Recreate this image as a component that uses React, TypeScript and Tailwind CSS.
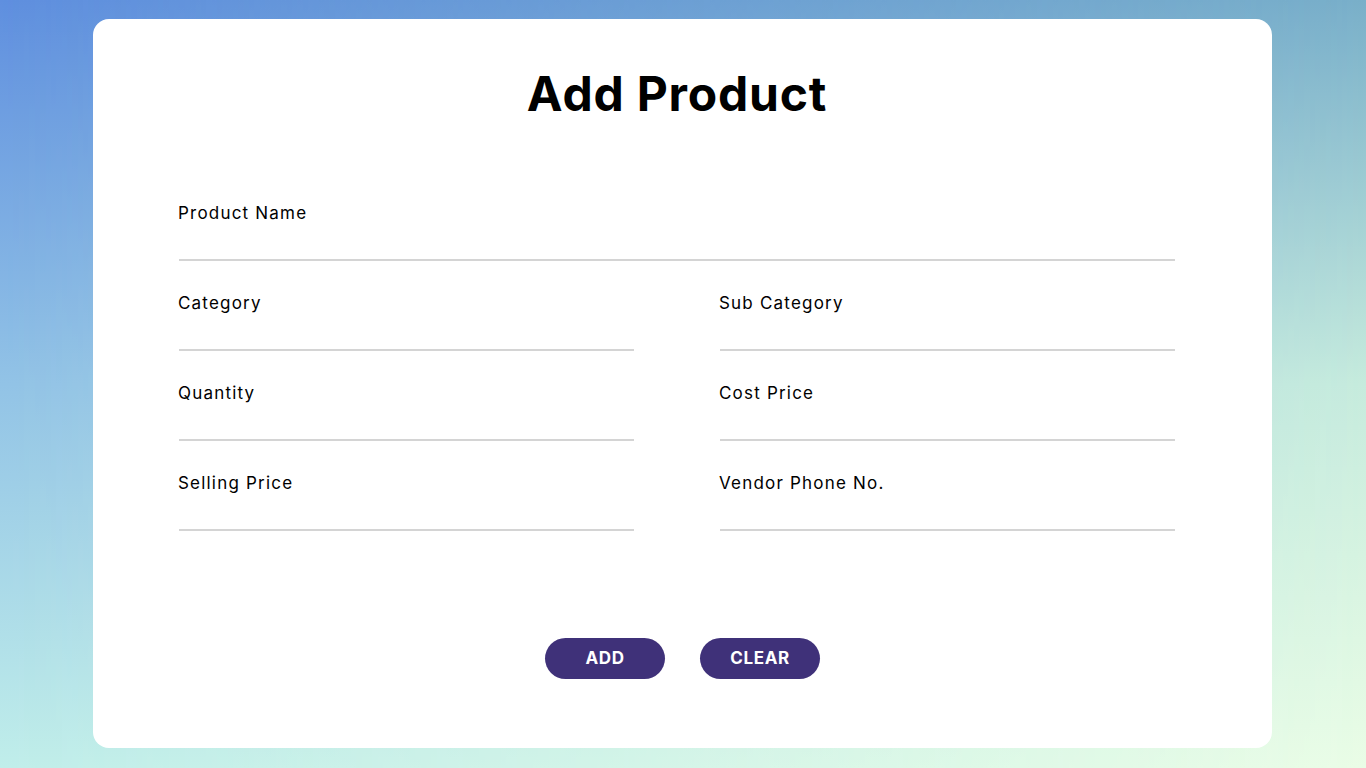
import React from "react";

const font = { fontFamily: '"Inter", "Open Sans", sans-serif' };

function Field({ label }: { label: string }) {
  return (
    <div className="h-[90px] border-b-2 border-[#d4d4d4] pt-[30px]">
      <div className="-ml-px text-[17px] leading-[24px] tracking-[1.2px] text-black">{label}</div>
    </div>
  );
}

export default function App() {
  return (
    <div
      className="relative min-h-[768px] w-full overflow-hidden bg-[linear-gradient(to_bottom,#5f8fdf_0%,#92c3e6_50%,#c0eeea_100%)]"
      style={font}
    >
      <div className="absolute inset-0 bg-[linear-gradient(to_bottom,#79afc9_0%,#c6ebdd_50%,#eafde6_100%)] [mask-image:linear-gradient(to_right,transparent,black)]" />
      <div className="relative pt-[19px] pb-[20px]">
        <div className="ml-[93px] flex h-[729px] w-[1179px] flex-col rounded-[16px] bg-white pt-[45px] pb-[69px]">
          <div className="pl-[86px] pr-[97px]">
            <h1 className="text-center text-[48px] font-bold leading-[60px] tracking-[0.8px] text-black">Add Product</h1>
            <div className="mt-[47px] grid grid-cols-2 gap-x-[86px]">
              <div className="col-span-2">
                <Field label="Product Name" />
              </div>
              <Field label="Category" />
              <Field label="Sub Category" />
              <Field label="Quantity" />
              <Field label="Cost Price" />
              <Field label="Selling Price" />
              <Field label="Vendor Phone No." />
            </div>
          </div>
          <div className="mt-auto flex justify-center gap-[35px]">
            <button className="h-[41px] w-[120px] rounded-full bg-[#3f3179] pt-px text-[17px] font-bold tracking-[0.6px] text-white">ADD</button>
            <button className="h-[41px] w-[120px] rounded-full bg-[#3f3179] pt-px text-[17px] font-bold tracking-[0.6px] text-white">CLEAR</button>
          </div>
        </div>
      </div>
    </div>
  );
}
